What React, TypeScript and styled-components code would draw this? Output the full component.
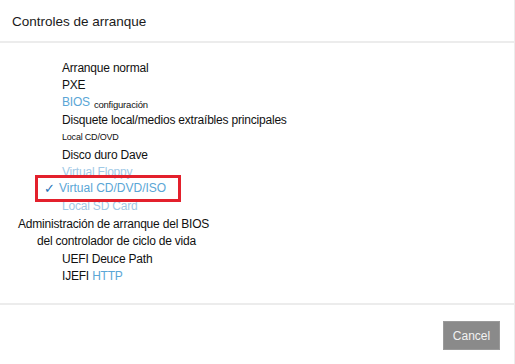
import React from "react";
import styled, { createGlobalStyle } from "styled-components";

const Global = createGlobalStyle`
  html, body { margin: 0; padding: 0; background: #fff; }
  body { font-family: "Liberation Sans", Arial, sans-serif; color: #111; }
`;

const Dialog = styled.div`
  width: 515px;
  height: 364px;
  display: flex;
  flex-direction: column;
  box-sizing: border-box;
  border-right: 1px solid #ececec;
`;

const Header = styled.div`
  height: 43px;
  box-sizing: border-box;
  padding: 14px 0 0 12px;
  font-size: 13.5px;
  color: #1a1a1a;
  border-bottom: 2px solid #ececec;
`;

const Body = styled.div`
  flex: 1;
  padding-top: 16px;
  display: flex;
  flex-direction: column;
`;

const Row = styled.div<{ $indent: number; $size?: number; $color?: string }>`
  height: 17.4px;
  display: flex;
  align-items: center;
  padding-left: ${(p) => p.$indent}px;
  font-size: ${(p) => p.$size ?? 12}px;
  color: ${(p) => p.$color ?? "#111"};
  white-space: nowrap;
  letter-spacing: -0.2px;
`;

const Blue = styled.span<{ $faded?: boolean }>`
  color: ${(p) => (p.$faded ? "#9fc9e6" : "#5aa6d6")};
`;

const Small = styled.span`
  font-size: 9.5px;
  margin-left: 4px;
  position: relative;
  top: 2px;
`;

const Selected = styled.div`
  margin-left: 35px;
  width: 146px;
  height: 27px;
  box-sizing: border-box;
  border: 3px solid #e3202c;
  display: flex;
  align-items: center;
  padding-left: 6px;
  font-size: 12px;
  color: #5aa6d6;
  margin-top: -6px;
  margin-bottom: -4px;
  position: relative;
  z-index: 1;
`;

const Check = styled.span`
  color: #2472b8;
  margin-right: 4px;
  font-size: 13px;
`;

const Footer = styled.div`
  height: 61px;
  border-top: 2px solid #ececec;
  display: flex;
  justify-content: flex-end;
  align-items: flex-start;
  padding: 16px 14px 0 0;
  box-sizing: border-box;
`;

const Button = styled.button`
  width: 57px;
  height: 29px;
  background: #8a8a8a;
  color: #f2f2f2;
  border: 1px solid #9a9a9a;
  font-family: "Liberation Sans", Arial, sans-serif;
  font-size: 12px;
  padding: 0;
`;

export default function App() {
  return (
    <>
      <Global />
      <Dialog>
        <Header>Controles de arranque</Header>
        <Body>
          <Row $indent={62}>Arranque normal</Row>
          <Row $indent={62}>PXE</Row>
          <Row $indent={62}>
            <Blue>BIOS</Blue>
            <Small>configuración</Small>
          </Row>
          <Row $indent={62}>Disquete local/medios extraíbles principales</Row>
          <Row $indent={62} $size={9}>Local CD/OVD</Row>
          <Row $indent={62}>Disco duro Dave</Row>
          <Row $indent={62}>
            <Blue $faded>Virtual Floppy</Blue>
          </Row>
          <Selected>
            <Check>✓</Check>Virtual CD/DVD/ISO
          </Selected>
          <Row $indent={62}>
            <Blue $faded>Local SD Card</Blue>
          </Row>
          <Row $indent={18}>Administración de arranque del BIOS</Row>
          <Row $indent={37}>del controlador de ciclo de vida</Row>
          <Row $indent={62}>UEFI Deuce Path</Row>
          <Row $indent={62}>
            IJEFI&nbsp;<Blue>HTTP</Blue>
          </Row>
        </Body>
        <Footer>
          <Button>Cancel</Button>
        </Footer>
      </Dialog>
    </>
  );
}
